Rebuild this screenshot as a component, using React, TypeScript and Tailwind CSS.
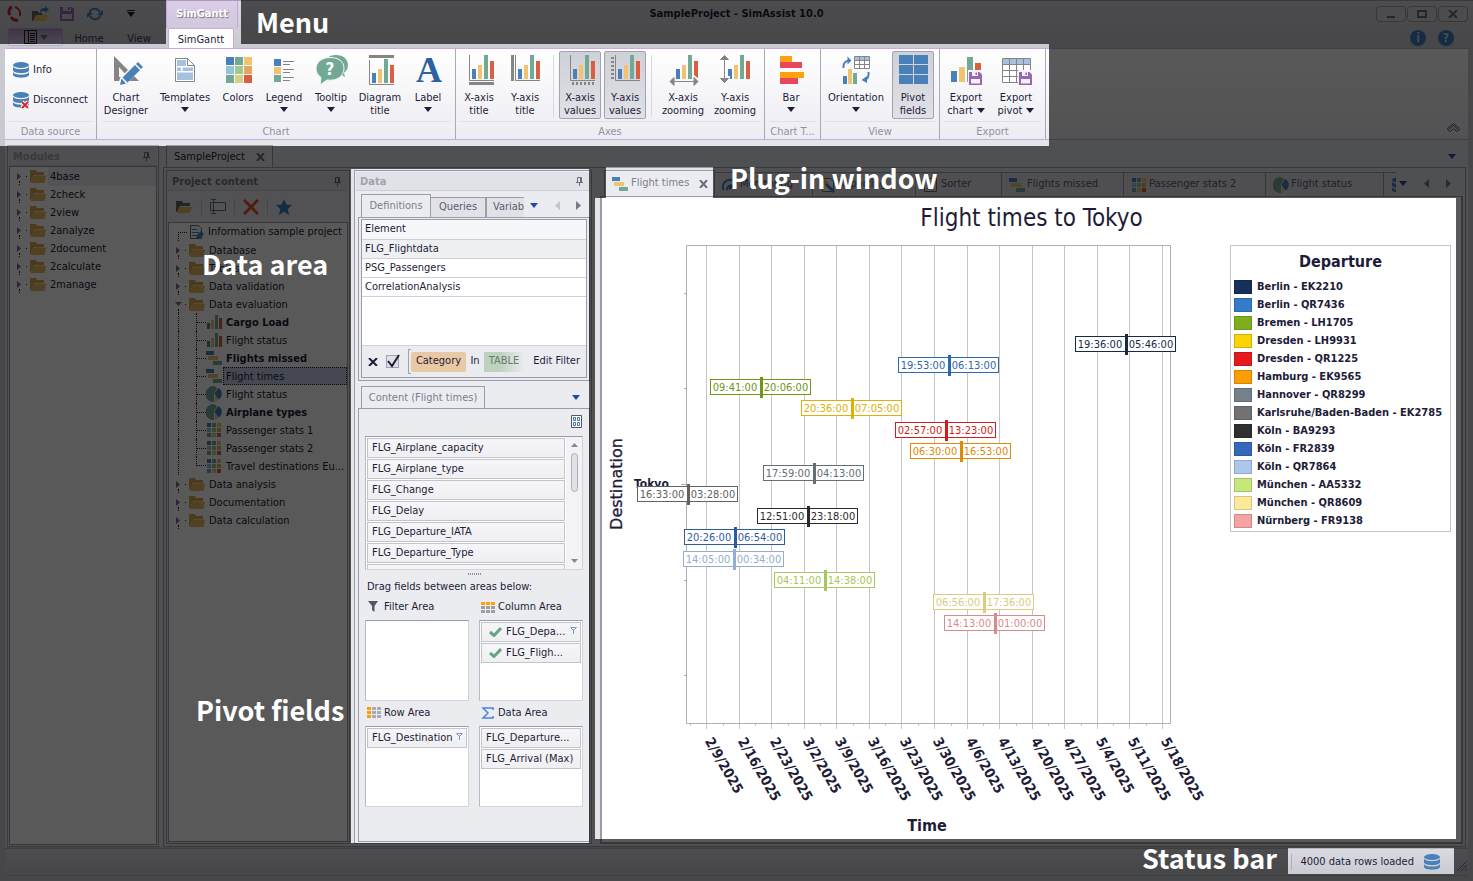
import React from 'react';

const BLUE = '#4a80b8';
const YELLOW = '#efc370';
const GREEN = '#72a995';
const RED = '#da5f40';
const GRAY = '#858585';

const FourBars: React.FC = () => (
  <>
    <rect x="9" y="15" width="4" height="10" fill={BLUE} />
    <rect x="15" y="11" width="4" height="14" fill={YELLOW} />
    <rect x="21" y="1" width="4" height="24" fill={GREEN} />
    <rect x="27" y="7" width="4" height="18" fill={RED} />
  </>
);

const Axis: React.FC = () => <path d="M6.5 1v25.5H31" fill="none" stroke={GRAY} />;

const Floppy: React.FC = () => (
  <>
    <path d="M18 16h14v15H18z" fill="#f6f6fa" />
    <path d="M19 18h10.500l2.500 2.500V31H19z" fill="#9468b0" />
    <path d="M22 18h6v4h-6zM21 25h9v4.500h-9z" fill="#f4f0f8" />
    <path d="M25.500 18.500h1.500v2.500h-1.500z" fill="#9468b0" />
  </>
);

const icons = {
  designer: (
    <>
      <path d="M4 2v25h25zM9 13l9 10H9z" fill={GRAY} fillRule="evenodd" />
      <path d="M8 32l2-8L27 7l6 6-17 17z" fill="#f8f8fb" />
      <path d="M10 31l1.500-6.500 4.500 5zM12.500 23.500L25 11l5 5-12.500 12.500zM26 10l2-2 5 5-2 2z" fill={BLUE} />
    </>
  ),
  templates: (
    <>
      <path d="M6.500 4.500h12l7 7v16h-19z" fill="#fff" stroke={GRAY} />
      <path d="M18.500 4.500v7h7" fill="none" stroke={GRAY} />
      <path d="M8 6h9v6H8zM8 13.500h4V17H8zM13.500 13.500H24V17H13.500zM8 18.500h16V26H8z" fill="#a6c0de" />
    </>
  ),
  colors: (
    <>
      <path d="M4 3h8v8H4z" fill={BLUE} />
      <path d="M13 3h8v8h-8z" fill={GREEN} />
      <path d="M22 3h8v8h-8z" fill={YELLOW} />
      <path d="M4 12h8v8H4z" fill="#93c5d8" />
      <path d="M13 12h8v8h-8z" fill="#9ccb8c" />
      <path d="M22 12h8v8h-8z" fill="#e5a75e" />
      <path d="M4 21h8v8H4z" fill={GREEN} />
      <path d="M13 21h8v8h-8z" fill="#d8cf86" />
      <path d="M22 21h8v8h-8z" fill={RED} />
    </>
  ),
  legend: (
    <>
      <path d="M6 5h7v7H6z" fill={BLUE} />
      <path d="M6 13h7v7H6z" fill={YELLOW} />
      <path d="M6 21h7v7H6z" fill={GREEN} />
      <path d="M15 7.500h11M15 10.500h7M15 15.500h11M15 18.500h7M15 23.500h11M15 26.500h7" stroke={GRAY} />
    </>
  ),
  tooltip: (
    <>
      <path d="M10 7c2-4 6-6 11-6 7 0 12 4 12 10 0 4-2 6-4 8l1 4-5-3z" fill={GREEN} />
      <path d="M15 3.500C7 3.500 1 8 1 14.500c0 4 2 7 5 9L5 31l7-5c10 1.500 17-4 17-11.500S23 3.500 15 3.500z" fill={GREEN} stroke="#f8f8fb" />
      <text x="15" y="21" textAnchor="middle" fontSize="17" fontWeight="bold" fill="#fff">?</text>
    </>
  ),
  diagramTitle: (
    <>
      <path d="M5 1h25v3H5z" fill={GRAY} />
      <path d="M5.500 6v24.500H30" fill="none" stroke={GRAY} />
      <path d="M8 19h4v10H8z" fill={BLUE} />
      <path d="M14 15h4v14h-4z" fill={YELLOW} />
      <path d="M20 5h4v24h-4z" fill={GREEN} />
      <path d="M26 11h4v18h-4z" fill={RED} />
    </>
  ),
  label: (
    <text x="17" y="28" textAnchor="middle" fontFamily="Liberation Serif, serif" fontSize="36" fontWeight="bold" fill="#2a62a4">A</text>
  ),
  xTitle: (
    <>
      <Axis />
      <FourBars />
      <path d="M6 28h25v3H6z" fill={GRAY} />
    </>
  ),
  yTitle: (
    <>
      <Axis />
      <FourBars />
      <path d="M2 1h3v26H2z" fill={GRAY} />
    </>
  ),
  xValues: (
    <>
      <Axis />
      <FourBars />
      <path d="M8 29.500h23" stroke={GRAY} strokeWidth="3" strokeDasharray="2 2" />
    </>
  ),
  yValues: (
    <>
      <Axis />
      <FourBars />
      <path d="M3.500 3v23" stroke={GRAY} strokeWidth="3" strokeDasharray="2 2" />
    </>
  ),
  xZoom: (
    <>
      <FourBars />
      <path d="M26 25l1-4 5 4z" fill="#f6f6fa" />
      <path d="M5 27.500h24M3 27.500l4-4v8zM31 27.500l-4-4v8z" stroke={GRAY} fill={GRAY} />
    </>
  ),
  yZoom: (
    <>
      <FourBars />
      <path d="M5 22h6v4H5z" fill="#f6f6fa" />
      <path d="M5.500 4v20M5.500 1.500l-4 4h8zM5.500 28.500l-4-4h8z" stroke={GRAY} fill={GRAY} />
    </>
  ),
  bar: (
    <>
      <path d="M5 2h12v6H5zM5 18h24v6H5z" fill="#ffa10f" />
      <path d="M5 8h22v6H5zM5 24h18v6H5z" fill="#e9455b" />
    </>
  ),
  orientation: (
    <>
      <path d="M14.500 2.500h15v12h-15z" fill="#fff" stroke={GRAY} />
      <path d="M15 3h14v3H15z" fill="#a6c0de" />
      <path d="M14.500 6.500h15M14.500 10.500h15M19.500 3v12M24.500 3v12" stroke={GRAY} />
      <path d="M3 22h4v8H3z" fill={BLUE} />
      <path d="M8 15h4v15H8z" fill={YELLOW} />
      <path d="M13 19h4v11h-4z" fill={GREEN} />
      <path d="M3.500 14C3 10 5 7 9 6.500M28.500 18c.5 4-1 7-4 8" fill="none" stroke={BLUE} strokeWidth="2" />
      <path d="M7.500 2.500l4 4-4 4zM27 22v7l-5.500-3z" fill={BLUE} />
    </>
  ),
  pivotFields: (
    <path
      d="M2 1h14v9H2zM17 1h14v9H17zM2 11h14v9H2zM17 11h14v9H17zM2 21h14v9H2zM17 21h14v9H17z"
      fill={BLUE}
    />
  ),
  exportChart: (
    <>
      <path d="M1 17h6v11H1z" fill={BLUE} />
      <path d="M9 13h6v15H9z" fill={YELLOW} />
      <path d="M17 3h6v25h-6z" fill={GREEN} />
      <path d="M25 9h6v10h-6z" fill={RED} />
      <Floppy />
    </>
  ),
  exportPivot: (
    <>
      <path d="M2.500 4.500h28v24h-28z" fill="#fff" stroke={GRAY} />
      <path d="M3 5h27v5H3z" fill="#a6c0de" />
      <path d="M2.500 10.500h28M2.500 16.500h28M2.500 22.500h28M9.500 5v24M16.500 5v24M23.500 5v24" stroke={GRAY} />
      <Floppy />
    </>
  ),
};

type IconName = keyof typeof icons;

const Caret: React.FC<{ className?: string }> = ({ className = 'fill-[#1e1c38]' }) => (
  <svg width="8" height="5" viewBox="0 0 8 5" className={className}>
    <path d="M0 0h8L4 5z" />
  </svg>
);

const Triangle: React.FC<{ dir: 'left' | 'right'; className: string }> = ({ dir, className }) => (
  <svg width="5" height="9" viewBox="0 0 5 9" className={className}>
    <path d={dir === 'left' ? 'M5 0v9L0 4.500z' : 'M0 0v9l5-4.500z'} />
  </svg>
);

const Database: React.FC<{ broken?: boolean }> = ({ broken }) => (
  <svg width="16" height="18" viewBox="0 0 16 18">
    <g fill={BLUE}>
      <ellipse cx="8" cy="4" rx="8" ry="3" />
      <path d="M0 5.500c1 3.500 15 3.500 16 0v4c-1 3.500-15 3.500-16 0zM0 11c1 3.500 15 3.500 16 0v3c-1 3.500-15 3.500-16 0z" />
    </g>
    {broken && <path d="M9 11l6 6m0-6l-6 6" stroke="#fff" strokeWidth="4" />}
    {broken && <path d="M9 11l6 6m0-6l-6 6" stroke="#d8262c" strokeWidth="2" />}
  </svg>
);

const Pin: React.FC = () => (
  <svg width="8" height="9" viewBox="0 0 8 9" fill="none" stroke="#6c6c7e">
    <path d="M1.500 5V.5h4V5M0 5.500h7M3.500 6v3" />
    <path d="M5 1v4" strokeWidth="2" />
  </svg>
);

const Close: React.FC = () => (
  <svg width="9" height="8" viewBox="0 0 9 8" stroke="#6c6c7e" strokeWidth="2">
    <path d="M1 0l7 8M8 0L1 8" />
  </svg>
);

const smallIcons = {
  folder: (
    <>
      <path d="M0 2h6l1 2h7v3H4L1 14H0z" fill="#dba84c" />
      <path d="M3.500 7.500H16L14.500 15H1z" fill="#e8b75e" />
    </>
  ),
  doc: (
    <>
      <path d="M1.500 1.500h8l3 3v10h-11z" fill="#fff" stroke="#6c6c6c" />
      <path d="M3 5.500h5M3 8.500h7M3 11.500h5" stroke={BLUE} />
      <path d="M7 15l1-4 4-4 3 3-4 4z" fill={BLUE} />
    </>
  ),
  bars: (
    <>
      <path d="M1 9h3v6H1z" fill={BLUE} />
      <path d="M5 6h3v9H5z" fill={YELLOW} />
      <path d="M9 1h3v14H9z" fill={GREEN} />
      <path d="M13 4h3v11h-3z" fill={RED} />
    </>
  ),
  gantt: (
    <>
      <path d="M0 1h8v4H0z" fill={BLUE} />
      <path d="M2 6h10v4H2z" fill={YELLOW} />
      <path d="M7 11h9v4H7z" fill={GREEN} />
    </>
  ),
  pie: (
    <>
      <path d="M7 0a8 8 0 1 0 1 16V8L11 2A8 8 0 0 0 7 0z" fill={GREEN} />
      <path d="M12 2l-3.500 6 4 5.500C17 11 17 4 12 2z" fill={BLUE} />
      <path d="M9 9l3 5-3 2z" fill={YELLOW} />
    </>
  ),
  grid: (
    <>
      <path d="M1 1h4v4H1z" fill={BLUE} />
      <path d="M6 1h4v4H6zM1 11h4v4H1z" fill={GREEN} />
      <path d="M11 1h4v4h-4z" fill={YELLOW} />
      <path d="M1 6h4v4H1z" fill="#93c5d8" />
      <path d="M6 6h4v4H6z" fill="#9ccb8c" />
      <path d="M11 6h4v4h-4z" fill="#e5a75e" />
      <path d="M6 11h4v4H6z" fill="#d8cf86" />
      <path d="M11 11h4v4h-4z" fill={RED} />
    </>
  ),
  gauge: (
    <>
      <path d="M1.500 13a7 7 0 0 1 13-6M5 13a4 4 0 0 1 6-4" fill="none" stroke={BLUE} strokeWidth="2" />
      <path d="M7 12l5-4" stroke="#555" strokeWidth="2" />
    </>
  ),
  report: (
    <>
      <path d="M2.500 1.500h8l3 3v10h-11z" fill="#fff" stroke="#6c6c6c" />
      <path d="M2 4l3-2 3 3-3 3z" fill={YELLOW} />
      <path d="M6 7l8 8" stroke={BLUE} strokeWidth="3" />
    </>
  ),
  sorter: <path d="M1.500 1.500h12v13h-12zM4 5.500h2M8 5.500h3M4 8.500h2M8 8.500h3M4 11.500h2M8 11.500h3" fill="none" stroke="#6c6c6c" />,
};

type SmallIconName = keyof typeof smallIcons;

const SmallIcon: React.FC<{ name: SmallIconName }> = ({ name }) => (
  <svg width="16" height="16" viewBox="0 0 16 16" className="flex-shrink-0">
    {smallIcons[name]}
  </svg>
);

const RibbonButton: React.FC<{
  icon: IconName;
  lines: string[];
  width: string;
  caret?: boolean;
  pressed?: boolean;
}> = ({ icon, lines, width, caret, pressed }) => (
  <button
    className={`flex h-[68px] flex-col items-center rounded-xs border pt-0.5 leading-[13px] ${width} ${
      pressed ? 'border-[#a2a3b2] bg-linear-to-b from-[#cfd1d8] to-[#e0e1e6]' : 'border-transparent'
    }`}
  >
    <svg width="34" height="34" viewBox="-1 0 34 34" className="flex-shrink-0 overflow-visible">
      {icons[icon]}
    </svg>
    <span className="mt-[3px] whitespace-nowrap">{lines[0]}</span>
    {lines[1] ? (
      <span className="flex items-center gap-1 whitespace-nowrap">
        {lines[1]}
        {caret && <Caret />}
      </span>
    ) : (
      caret && (
        <span className="mt-[3px]">
          <Caret />
        </span>
      )
    )}
  </button>
);

const RibbonGroup: React.FC<{ title: string; width: string; children: React.ReactNode }> = ({ title, width, children }) => (
  <section className={`flex flex-shrink-0 flex-col border-r border-[#a9aab8] pt-0.5 ${width}`}>
    <div className="flex h-[70px]">{children}</div>
    <h2 className="mx-1 whitespace-nowrap border-t border-[#e0e0e6] pt-[3px] text-center leading-[14px] text-[#92929f]">{title}</h2>
  </section>
);

const Divider: React.FC = () => <div className="mx-[5px] my-1 w-px bg-[#d9d9e0]" />;

const WindowButton: React.FC<{ label: string; children: React.ReactNode }> = ({ label, children }) => (
  <button aria-label={label} className="flex h-4 w-[30px] items-center justify-center rounded-sm border border-[#9c9ca8] bg-[#d8d9df]">
    <svg width="10" height="8" viewBox="0 0 10 8" fill="none" stroke="#6c6c78" strokeWidth="2">
      {children}
    </svg>
  </button>
);

const TitleBar: React.FC = () => (
  <div className="grid h-7 grid-cols-[1fr_auto_1fr] border-t border-[#a4a4ae]">
    <div className="flex">
      <div className="flex w-[166px] items-center pl-[7px] pb-[2px]">
        <svg width="15" height="17" viewBox="0 0 15 17" fill="none" stroke="#d0202c" strokeWidth="3">
          <path d="M3 10C1 7 2 3 5 2" />
          <path d="M8 2c4 1 6 5 5 9" strokeWidth="2" />
          <path d="M4 12c2 3 4 4 7 3" />
        </svg>
        <svg width="17" height="16" viewBox="0 0 17 16" className="ml-2.5">
          <path d="M0 5h6l1 2h3v3H4l-3 5H0z" fill="#626262" />
          <path d="M4 9h12l-2 6H1z" fill="#e8b75e" />
          <path d="M8 7c0-4 2-5 5-5V0l4 3.500L13 7V5c-2 0-3 0-5 2z" fill={BLUE} />
        </svg>
        <svg width="14" height="14" viewBox="0 0 14 14" className="ml-[11px]">
          <path d="M0 0h12l2 2v12H0z" fill="#9468b0" />
          <path d="M3 0h8v4H3zM2 7h10v5H2z" fill="#d4d4da" />
          <path d="M8 0h2v3H8z" fill="#9468b0" />
        </svg>
        <svg width="16" height="14" viewBox="0 0 16 14" className="ml-[13px]" fill="none" stroke={BLUE} strokeWidth="2">
          <path d="M2.500 6C4 1 10 0 13 5M13.500 8C12 13 6 14 3 9" />
          <path d="M16 3v5h-6zM0 11V6h6z" fill={BLUE} stroke="none" />
        </svg>
        <span className="ml-6 flex flex-col items-center gap-px">
          <span className="h-px w-2 bg-[#1e1c38]" />
          <Caret />
        </span>
      </div>
      <div className="w-[72px] border-x border-[#c7a3e0] bg-linear-to-b from-[#dccbe8] to-[#cfcadb] pt-1 text-center font-bold leading-[18px] text-white [text-shadow:1px_1px_1px_#77748a]">
        SimGantt
      </div>
    </div>
    <h1 className="pt-1 font-bold leading-[18px]">SampleProject - SimAssist 10.0</h1>
    <div className="flex justify-end gap-px pt-[5px] pr-[5px]">
      <WindowButton label="Minimize">
        <path d="M1 7h8" />
      </WindowButton>
      <WindowButton label="Maximize">
        <path d="M1 1h8v6H1z" />
      </WindowButton>
      <WindowButton label="Close">
        <path d="M1 0l8 8M9 0L1 8" />
      </WindowButton>
    </div>
  </div>
);

const RibbonTabs: React.FC = () => (
  <nav className="flex h-5 items-start">
    <button aria-label="Application menu" className="ml-2 flex h-[18px] w-[55px] items-center justify-center gap-0.5 rounded-xs border border-[#b3b3c0] bg-linear-to-b from-[#b394cb] to-[#dccfe8]">
      <svg width="14" height="14" viewBox="0 0 14 14" fill="none" stroke="#222">
        <path d="M.5.500h12v13H.5zM4.500.500v13M6 3.500h5M6 5.500h5M6 7.500h5M6 9.500h5M6 11.500h5" />
      </svg>
      <Caret className="fill-[#6c6c7e]" />
    </button>
    <a href="#" className="w-[52px] pt-0.5 text-center leading-[18px] text-[#3a3a50]">Home</a>
    <a href="#" className="w-[48px] pt-0.5 text-center leading-[18px] text-[#3a3a50]">View</a>
    <a href="#" className="ml-[5px] h-[21px] w-[66px] rounded-t-xs border border-b-0 border-[#c9a8e3] bg-white pt-0.5 text-center leading-[18px]">
      SimGantt
    </a>
    <div className="ml-auto flex gap-3 pr-[19px] pt-0.5">
      {['i', '?'].map((sign) => (
        <button key={sign} className="size-4 rounded-full bg-[#3c7fc4] text-xs font-bold leading-4 text-[#d4d4da]">
          {sign}
        </button>
      ))}
    </div>
  </nav>
);

const Ribbon: React.FC = () => (
  <div className="mx-[5px] flex h-[92px] border-y border-[#c9a8e3] bg-linear-to-b from-white to-[#ececf2]">
    <RibbonGroup title="Data source" width="w-[92px]">
      <div className="flex flex-col pl-2 pt-1">
        <button className="flex h-[30px] items-center gap-1">
          <Database /> Info
        </button>
        <button className="flex h-[30px] items-center gap-1">
          <Database broken /> Disconnect
        </button>
      </div>
    </RibbonGroup>
    <RibbonGroup title="Chart" width="w-[359px]">
      <RibbonButton icon="designer" lines={['Chart', 'Designer']} width="w-14 ml-px" />
      <RibbonButton icon="templates" lines={['Templates']} width="w-[62px]" caret />
      <RibbonButton icon="colors" lines={['Colors']} width="w-11" />
      <RibbonButton icon="legend" lines={['Legend']} width="w-12" caret />
      <RibbonButton icon="tooltip" lines={['Tooltip']} width="w-[46px]" caret />
      <RibbonButton icon="diagramTitle" lines={['Diagram', 'title']} width="w-[52px]" />
      <RibbonButton icon="label" lines={['Label']} width="w-11" caret />
    </RibbonGroup>
    <RibbonGroup title="Axes" width="w-[309px]">
      <RibbonButton icon="xTitle" lines={['X-axis', 'title']} width="w-[46px]" />
      <RibbonButton icon="yTitle" lines={['Y-axis', 'title']} width="w-[46px]" />
      <Divider />
      <div className="flex gap-[3px]">
        <RibbonButton icon="xValues" lines={['X-axis', 'values']} width="w-[42px]" pressed />
        <RibbonButton icon="yValues" lines={['Y-axis', 'values']} width="w-[42px]" pressed />
      </div>
      <Divider />
      <RibbonButton icon="xZoom" lines={['X-axis', 'zooming']} width="w-[52px]" />
      <RibbonButton icon="yZoom" lines={['Y-axis', 'zooming']} width="w-[52px]" />
    </RibbonGroup>
    <RibbonGroup title="Chart T..." width="w-14">
      <RibbonButton icon="bar" lines={['Bar']} width="w-[52px]" caret />
    </RibbonGroup>
    <RibbonGroup title="View" width="w-[119px]">
      <RibbonButton icon="orientation" lines={['Orientation']} width="w-[70px]" caret />
      <RibbonButton icon="pivotFields" lines={['Pivot', 'fields']} width="w-[42px] ml-px" pressed />
    </RibbonGroup>
    <RibbonGroup title="Export" width="w-[106px]">
      <RibbonButton icon="exportChart" lines={['Export', 'chart']} width="w-[50px] ml-px" caret />
      <RibbonButton icon="exportPivot" lines={['Export', 'pivot']} width="w-[50px]" caret />
    </RibbonGroup>
    <button aria-label="Collapse ribbon" className="mb-1.5 ml-auto mr-2 self-end">
      <svg width="13" height="10" viewBox="0 0 13 10" fill="none" stroke="#5c5c68">
        <path d="M.5 5.500l6-5 6 5-1 2-2 1-3-3-3 3-2-1z" />
        <path d="M2 6.500l4.500-4 4.500 4" />
      </svg>
    </button>
  </div>
);

const PanelHeader: React.FC<{ title: string; muted?: boolean }> = ({ title, muted }) => (
  <div className="flex h-[19px] items-center justify-between border-b border-[#cdced6] bg-[#e1e2e7] pl-1 pr-1.5 pt-px">
    <h2 className={`font-bold leading-4 ${muted ? 'text-[#a2a2b0]' : 'text-[#74748a]'}`}>{title}</h2>
    <button aria-label={`Pin ${title}`}>
      <Pin />
    </button>
  </div>
);

const TreeToggle: React.FC<{ open?: boolean }> = ({ open }) => (
  <span className="flex h-full w-2 flex-shrink-0 flex-col items-center justify-between">
    <span className="h-1" />
    {open ? (
      <svg width="7" height="4" viewBox="0 0 7 4" fill="#74748a">
        <path d="M0 0h7L3.500 4z" />
      </svg>
    ) : (
      <svg width="4" height="7" viewBox="0 0 4 7" fill="#74748a">
        <path d="M0 0v7l4-3.500z" />
      </svg>
    )}
    <span className="h-1 border-l border-dotted border-[#222]" />
  </span>
);

const FolderRow: React.FC<{ label: string; open?: boolean; active?: boolean }> = ({ label, open, active }) => (
  <li className="flex h-[18px] items-center pl-[5px]">
    <TreeToggle open={open} />
    <span className="mx-[3px] w-px border-t border-dotted border-[#222]" />
    <SmallIcon name="folder" />
    <span className={`ml-0.5 flex-1 pl-0.5 pt-px leading-[18px] ${active ? 'bg-[#ecedf1]' : ''}`}>{label}</span>
  </li>
);

const modules = ['4base', '2check', '2view', '2analyze', '2document', '2calculate', '2manage'];

const ModulesPanel: React.FC = () => (
  <aside className="flex w-[152px] flex-shrink-0 flex-col border border-[#a4a4b2] bg-[#ebecf0] p-px">
    <PanelHeader title="Modules" muted />
    <ul className="flex-1 border border-[#9c9baa] bg-white">
      {modules.map((name, i) => (
        <FolderRow key={name} label={name} active={i === 0} />
      ))}
    </ul>
  </aside>
);

const evaluations: { icon: SmallIconName; label: string; bold?: boolean; selected?: boolean }[] = [
  { icon: 'bars', label: 'Cargo Load', bold: true },
  { icon: 'bars', label: 'Flight status' },
  { icon: 'gantt', label: 'Flights missed', bold: true },
  { icon: 'gantt', label: 'Flight times', selected: true },
  { icon: 'pie', label: 'Flight status' },
  { icon: 'pie', label: 'Airplane types', bold: true },
  { icon: 'grid', label: 'Passenger stats 1' },
  { icon: 'grid', label: 'Passenger stats 2' },
  { icon: 'grid', label: 'Travel destinations Eu...' },
];

const ProjectPanel: React.FC = () => (
  <aside className="flex w-[184px] flex-shrink-0 flex-col border border-[#9c9baa] bg-[#ebecf0] p-px">
    <PanelHeader title="Project content" />
    <div className="flex h-[31px] items-center pl-2">
      <button aria-label="Open">
        <svg width="17" height="14" viewBox="0 0 17 14">
          <path d="M0 1h6l1 2h7v3H4l-3 6H0z" fill="#666" />
          <path d="M4 7h13l-4 6H1z" fill="#e8b75e" />
        </svg>
      </button>
      <span className="mx-2 h-4 w-px bg-[#c6c6d0]" />
      <button aria-label="Rename">
        <svg width="16" height="15" viewBox="0 0 16 15" fill="none" stroke="#6c6c7e">
          <path d="M.5 3.500h15v8H.5z" />
          <path d="M1 .500h5M3.500 1v13M1 14.500h5" stroke="#3c7fc4" />
        </svg>
      </button>
      <span className="mx-2 h-4 w-px bg-[#c6c6d0]" />
      <button aria-label="Delete">
        <svg width="16" height="16" viewBox="0 0 16 16" stroke="#e2502c" strokeWidth="3">
          <path d="M1 1l14 14M15 1L1 15" />
        </svg>
      </button>
      <span className="mx-2 h-4 w-px bg-[#c6c6d0]" />
      <button aria-label="Favorite">
        <svg width="16" height="16" viewBox="0 0 16 16" fill="#3c7fc4">
          <path d="M8 0l2.400 5.400 5.600.6-4.200 3.900L13 16l-5-3.200L3 16l1.200-6.100L0 6l5.600-.6z" />
        </svg>
      </button>
    </div>
    <ul className="flex-1 border border-[#9c9baa] bg-white">
      <li className="flex h-[18px] items-center pl-[9px]">
        <span className="h-[9px] w-[9px] self-end border-l border-t border-dotted border-[#222]" />
        <span className="ml-0.5 mr-[3px] flex">
          <SmallIcon name="doc" />
        </span>
        <span className="whitespace-nowrap">Information sample project</span>
      </li>
      <FolderRow label="Database" />
      <FolderRow label="Tables" />
      <FolderRow label="Data validation" />
      <FolderRow label="Data evaluation" open />
      {evaluations.map(({ icon, label, bold, selected }, i) => (
        <li key={i} className="flex h-[18px] items-center pl-[9px]">
          <span className="h-full w-[18px] flex-shrink-0 border-l border-dotted border-[#222]" />
          <span
            className={`flex w-2.5 flex-shrink-0 border-l border-dotted border-[#222] ${
              i === evaluations.length - 1 ? 'h-[9px] items-end self-start' : 'h-full items-center'
            }`}
          >
            <span className="w-full border-t border-dotted border-[#222]" />
          </span>
          <SmallIcon name={icon} />
          <span
            className={`ml-px h-full flex-1 whitespace-nowrap border border-dotted pl-0.5 leading-[17px] ${bold ? 'font-bold' : ''} ${
              selected ? 'border-[#222] bg-[#c5cee4]' : 'border-transparent'
            }`}
          >
            {label}
          </span>
        </li>
      ))}
      <FolderRow label="Data analysis" />
      <FolderRow label="Documentation" />
      <FolderRow label="Data calculation" />
    </ul>
  </aside>
);

const Field: React.FC<{ name: string; check?: boolean; filter?: boolean }> = ({ name, check, filter }) => (
  <li className="flex h-5 flex-shrink-0 items-center border border-[#c2c3cd] bg-linear-to-b from-[#f6f6f8] to-[#efeff2] pl-1">
    {check && (
      <svg width="13" height="10" viewBox="0 0 13 10" className="ml-[3px] mr-1" fill="none" stroke="#68a388" strokeWidth="3">
        <path d="M1 5l4 3.500L12 1" />
      </svg>
    )}
    <span className="whitespace-nowrap">{name}</span>
    {filter && (
      <svg width="7" height="8" viewBox="0 0 7 8" className="ml-auto mr-[3px] mb-1" fill="none" stroke="#8796cf">
        <path d="M.5 1.500h6L4 4H3zM3.500 4v4" />
      </svg>
    )}
  </li>
);

const AreaBox: React.FC<{ title: string; icon: React.ReactNode; children?: React.ReactNode }> = ({ title, icon, children }) => (
  <section>
    <h3 className="flex h-[25px] items-center gap-0.5 pl-0.5">
      <svg width="15" height="13" viewBox="0 0 15 13">
        {icon}
      </svg>
      {title}
    </h3>
    <ul className="flex h-[81px] flex-col gap-px border border-[#d3d4db] border-t-[#9c9baa] border-l-[#b8b9c5] bg-white p-px">{children}</ul>
  </section>
);

const availableFields = [
  'FLG_Airplane_capacity',
  'FLG_Airplane_type',
  'FLG_Change',
  'FLG_Delay',
  'FLG_Departure_IATA',
  'FLG_Departure_Type',
  'FLG_Destination_IATA',
];

const DataPanel: React.FC = () => (
  <aside className="flex w-[238px] flex-shrink-0 flex-col border border-[#9c9baa] bg-[#ebecf0] p-px">
    <PanelHeader title="Data" muted />
    <div className="flex items-end px-[5px] pt-[3px]">
      <button className="-mb-px h-6 w-[70px] border border-b-0 border-[#9c9baa] bg-[#ebecf0] text-[#7d7d8e]">Definitions</button>
      <button className="h-5 w-[55px] border border-b-0 border-l-0 border-[#9c9baa] bg-[#e1e2e7] text-[#5c5c70]">Queries</button>
      <button className="h-5 w-[38px] overflow-hidden whitespace-nowrap border border-b-0 border-r-0 border-[#9c9baa] bg-[#e1e2e7] pl-1.5 text-left text-[#5c5c70]">
        Variables
      </button>
      <div className="flex flex-1 items-center justify-between self-center pl-1.5 pr-1">
        <Caret className="fill-[#2346ad]" />
        <Triangle dir="left" className="fill-[#c3c3cc]" />
        <Triangle dir="right" className="fill-[#78788a]" />
      </div>
    </div>
    <div className="ml-0.5 border border-[#9c9baa] p-0.5 pt-px">
      <div className="border border-[#9c9baa] bg-white">
        <div className="h-[125px]">
          <table className="w-full border-collapse text-left leading-[18px]">
            <thead>
              <tr className="border-b border-[#cfd0d8] bg-[#f6f7f9]">
                <th className="pb-px pl-[3px] font-normal">Element</th>
              </tr>
            </thead>
            <tbody>
              {['FLG_Flightdata', 'PSG_Passengers', 'CorrelationAnalysis'].map((name, i) => (
                <tr key={name} className={`border-b border-[#cfd0d8] ${i === 0 ? 'bg-[#eff0f2]' : ''}`}>
                  <td className="pl-[3px]">{name}</td>
                </tr>
              ))}
            </tbody>
          </table>
        </div>
        <div className="flex h-8 items-center border-t border-[#cfd0d8] bg-[#ebecf0] pl-1.5">
          <button aria-label="Clear filter">
            <svg width="10" height="8" viewBox="0 0 10 8" stroke="#1e1c38" strokeWidth="2">
              <path d="M1 0l8 8M9 0L1 8" />
            </svg>
          </button>
          <label className="relative ml-2 flex">
            <input type="checkbox" defaultChecked aria-label="Filter active" className="size-[13px] appearance-none border border-[#a2a3b2] bg-[#dfe0e5]" />
            <svg width="14" height="14" viewBox="0 0 14 14" className="pointer-events-none absolute -top-px left-0" fill="none" stroke="#1e1c38" strokeWidth="2">
              <path d="M2 7l4 5 7-11" />
            </svg>
          </label>
          <span className="ml-[9px] h-[25px] w-[3px] border border-r-0 border-[#a2a3b2]" />
          <button className="h-5 w-[55px] rounded-xs bg-[#e9c9a5]">Category</button>
          <span className="w-[18px] text-center">In</span>
          <button className="h-5 w-10 bg-linear-to-r from-[#bdd3bd] from-40% to-[#ebecf0] text-[#6c7a70]">TABLE</button>
          <button className="ml-auto mr-1.5 whitespace-nowrap">Edit Filter</button>
        </div>
      </div>
    </div>
    <div className="flex items-end justify-between pl-[5px] pr-2.5 pt-[5px]">
      <button className="-mb-px h-[23px] w-[124px] border border-b-0 border-[#9c9baa] bg-[#ebecf0] text-[#7d7d8e]">Content (Flight times)</button>
      <span className="self-center">
        <Caret className="fill-[#2346ad]" />
      </span>
    </div>
    <div className="ml-0.5 flex flex-1 flex-col border border-[#9c9baa] px-1.5 pt-1.5">
      <button aria-label="Field layout" className="mr-px self-end">
        <svg width="11" height="13" viewBox="0 0 11 13" fill="none">
          <path d="M.5.500h10v12H.5z" stroke="#555568" fill="#fff" />
          <path d="M2.500 2.500h2v3h-2zM6.500 2.500h2v3h-2zM2.500 7.500h2v3h-2zM6.500 7.500h2v3h-2z" stroke="#3f74cc" />
        </svg>
      </button>
      <div className="mt-2 flex h-[134px] border border-[#d3d4db] border-t-[#9c9baa] border-l-[#b8b9c5] bg-white">
        <ul className="flex flex-1 flex-col gap-px overflow-hidden p-px">
          {availableFields.map((name) => (
            <Field key={name} name={name} />
          ))}
        </ul>
        <div className="flex w-4 flex-col items-center justify-between bg-[#f3f3f6] py-1.5">
          <div className="flex flex-col items-center gap-1.5">
            <svg width="7" height="4" viewBox="0 0 7 4" fill="#85859a">
              <path d="M0 4h7L3.500 0z" />
            </svg>
            <div className="h-[39px] w-[7px] rounded-full border border-[#b0b0bc] bg-[#e0e0e6]" />
          </div>
          <svg width="7" height="4" viewBox="0 0 7 4" fill="#85859a">
            <path d="M0 0h7L3.500 4z" />
          </svg>
        </div>
      </div>
      <svg width="13" height="2" viewBox="0 0 13 2" className="mx-auto mt-[3px]">
        <path d="M0 1h13" stroke="#8f8fa0" strokeWidth="2" strokeDasharray="1 1" />
      </svg>
      <p className="mt-1 pl-0.5 leading-4">Drag fields between areas below:</p>
      <div className="grid grid-cols-2 gap-x-2.5">
        <AreaBox title="Filter Area" icon={<path d="M1 0h10L7.500 5v6L5 9V5z" fill="#555568" />}></AreaBox>
        <AreaBox
          title="Column Area"
          icon={
            <>
              <path d="M0 1h4v3H0zM5 1h4v3H5zM10 1h4v3h-4z" fill="#ff9d0a" />
              <path d="M0 5h4v3H0zM5 5h4v3H5zM10 5h4v3h-4zM0 9h4v3H0zM5 9h4v3H5zM10 9h4v3h-4z" fill="#9e9ea8" />
            </>
          }
        >
          <Field name="FLG_Depa..." check filter />
          <Field name="FLG_Fligh..." check />
        </AreaBox>
        <AreaBox
          title="Row Area"
          icon={
            <>
              <path d="M0 0h4v3H0zM0 4h4v3H0zM0 8h4v3H0z" fill="#ff9d0a" />
              <path d="M5 0h4v3H5zM10 0h4v3h-4zM5 4h4v3H5zM10 4h4v3h-4zM5 8h4v3H5zM10 8h4v3h-4z" fill="#aaaab2" />
            </>
          }
        >
          <Field name="FLG_Destination" filter />
        </AreaBox>
        <AreaBox title="Data Area" icon={<path d="M12 3V1H2l5 5-5 5h10V9" fill="none" stroke="#4f83d8" strokeWidth="1.500" />}>
          <Field name="FLG_Departure..." />
          <Field name="FLG_Arrival (Max)" />
        </AreaBox>
      </div>
    </div>
  </aside>
);

const ticks = [
  '2/9/2025', '2/16/2025', '2/23/2025', '3/2/2025', '3/9/2025', '3/16/2025', '3/23/2025', '3/30/2025',
  '4/6/2025', '4/13/2025', '4/20/2025', '4/27/2025', '5/4/2025', '5/11/2025', '5/18/2025',
];

// x and y locate the marker inside the plot area
const flights = [
  { x: 439, y: 99, start: '19:36:00', end: '05:46:00', color: '#15294a' },
  { x: 262, y: 120, start: '19:53:00', end: '06:13:00', color: '#2b68ac' },
  { x: 74, y: 142, start: '09:41:00', end: '20:06:00', color: '#6f9618' },
  { x: 165, y: 163, start: '20:36:00', end: '07:05:00', color: '#dcb208' },
  { x: 259, y: 185, start: '02:57:00', end: '13:23:00', color: '#cf1c20' },
  { x: 274, y: 206, start: '06:30:00', end: '16:53:00', color: '#dc8a08' },
  { x: 127, y: 228, start: '17:59:00', end: '04:13:00', color: '#656d75' },
  { x: 1, y: 249, start: '16:33:00', end: '03:28:00', color: '#626262' },
  { x: 121, y: 271, start: '12:51:00', end: '23:18:00', color: '#2a2a2a' },
  { x: 48, y: 292, start: '20:26:00', end: '06:54:00', color: '#2d5ba3' },
  { x: 47, y: 314, start: '14:05:00', end: '00:34:00', color: '#93aed0' },
  { x: 138, y: 335, start: '04:11:00', end: '14:38:00', color: '#a8c65c' },
  { x: 297, y: 357, start: '06:56:00', end: '17:36:00', color: '#dccb80' },
  { x: 308, y: 378, start: '14:13:00', end: '01:00:00', color: '#d98b8b' },
];

const legend = [
  { label: 'Berlin - EK2210', color: '#16305a' },
  { label: 'Berlin - QR7436', color: '#347cca' },
  { label: 'Bremen - LH1705', color: '#7fae1c' },
  { label: 'Dresden - LH9931', color: '#fad206' },
  { label: 'Dresden - QR1225', color: '#e41a1c' },
  { label: 'Hamburg - EK9565', color: '#fb9d04' },
  { label: 'Hannover - QR8299', color: '#75808a' },
  { label: 'Karlsruhe/Baden-Baden - EK2785', color: '#727272' },
  { label: 'Köln - BA9293', color: '#2f2f2f' },
  { label: 'Köln - FR2839', color: '#3468b8' },
  { label: 'Köln - QR7864', color: '#abc8ec' },
  { label: 'München - AA5332', color: '#c6e878' },
  { label: 'München - QR8609', color: '#fde99a' },
  { label: 'Nürnberg - FR9138', color: '#f6a3a3' },
];

const GanttChart: React.FC = () => (
  <svg width="605" height="595" viewBox="-84 0 605 595" className="flex-shrink-0 overflow-visible" fontSize="11" fill="#1e1c38">
    {ticks.map((label, i) => {
      const x = Math.round(20 + i * 32.57) + 0.5;
      return (
        <g key={label}>
          <path d={`M${x} 0v484M${x - 16} 478v3`} stroke="#c6c6c6" />
          <text transform={`translate(${x - 2} 496) rotate(60)`} fontSize="14" fontWeight="bold">
            {label}
          </text>
        </g>
      );
    })}
    <path d="M.5.500h484v478H.5zM-2 48.500h2M-2 143.500h2M-5 239.500h5M-2 335.500h2M-2 430.500h2" fill="none" stroke="#b0b0b0" />
    <text x="-52" y="243" fontSize="12" fontWeight="bold">Tokyo</text>
    <text transform="translate(-64 239) rotate(-90)" textAnchor="middle" fontFamily="DejaVu Sans, sans-serif" fontSize="16" stroke="#1e1c38" strokeWidth="0.300">
      Destination
    </text>
    <text x="241" y="586" textAnchor="middle" fontSize="16" fontWeight="bold">Time</text>
    {flights.map(({ x, y, start, end, color }) => (
      <g key={start} fill={color}>
        <rect x={x - 49.500} y={y - 7.500} width="100" height="15" fill="#fff" stroke={color} />
        <rect x={x} y={y - 10} width="3" height="21" />
        <text x={x - 25} y={y + 4} textAnchor="middle">{start}</text>
        <text x={x + 26} y={y + 4} textAnchor="middle">{end}</text>
      </g>
    ))}
  </svg>
);

const windowTabs: { icon: SmallIconName; label: string; width: string }[] = [
  { icon: 'gauge', label: 'Monitoring', width: 'w-[98px]' },
  { icon: 'report', label: 'Reporting', width: 'w-[103px]' },
  { icon: 'sorter', label: 'Sorter', width: 'w-[86px]' },
  { icon: 'gantt', label: 'Flights missed', width: 'w-[122px]' },
  { icon: 'grid', label: 'Passenger stats 2', width: 'w-[142px]' },
  { icon: 'pie', label: 'Flight status', width: 'w-[118px]' },
];

const PluginWindow: React.FC = () => (
  <section className="ml-2 flex min-w-0 flex-1 flex-col">
    <div className="flex h-[26px] items-end pl-1">
      <button className="flex h-[26px] w-[111px] flex-shrink-0 items-center border border-b-0 border-[#9c9baa] bg-[#ebecf0] pl-[7px] text-[#7d7d8e]">
        <SmallIcon name="gantt" />
        <span className="ml-[3px] flex-1 whitespace-nowrap text-left">Flight times</span>
        <span className="mr-1.5">
          <Close />
        </span>
      </button>
      {windowTabs.map(({ icon, label, width }) => (
        <button
          key={label}
          className={`flex h-6 flex-shrink-0 items-center gap-0.5 border border-b-0 border-l-0 border-[#9c9baa] bg-[#e1e2e7] pl-[7px] text-[#5c5c70] ${width}`}
        >
          <SmallIcon name={icon} />
          <span className="whitespace-nowrap">{label}</span>
        </button>
      ))}
      <button aria-label="Database" className="flex h-6 w-3 items-center overflow-hidden border-t border-[#9c9baa] bg-[#e1e2e7] pl-2">
        <span className="flex-shrink-0">
          <Database />
        </span>
      </button>
      <div className="ml-auto flex items-center gap-[17px] self-center pr-3">
        <Caret className="fill-[#2346ad]" />
        <Triangle dir="left" className="fill-[#78788a]" />
        <Triangle dir="right" className="fill-[#78788a]" />
      </div>
    </div>
    <div className="flex-1 border-2 border-t border-[#9c9baa] bg-white">
      <h2 className="pt-[7px] text-center text-[24px] leading-[28px]">Flight times to Tokyo</h2>
      <div className="flex items-start justify-between pr-2.5 pt-[13px]">
        <GanttChart />
        <div className="w-[221px] flex-shrink-0 border border-[#c6c6c6] pb-px">
          <h3 className="pt-1.5 text-center text-base font-bold leading-5">Departure</h3>
          <ul className="mt-1.5 px-[3px]">
            {legend.map(({ label, color }) => (
              <li key={label} className="flex h-[18px] items-center gap-[5px] font-bold">
                <span className="h-3.5 w-[18px] flex-shrink-0 border border-black/15" style={{ backgroundColor: color }} />
                <span className="whitespace-nowrap">{label}</span>
              </li>
            ))}
          </ul>
        </div>
      </div>
    </div>
  </section>
);

const StatusBar: React.FC = () => (
  <footer className="mx-[5px] mt-px flex h-7 items-center justify-end border-y border-[#b4b4be] bg-linear-to-b from-[#dadbe1] to-[#c9cad2] pr-5">
    <span className="mr-2 h-4 w-px bg-[#b0b0ba]" />
    <span>4000 data rows loaded</span>
    <span className="ml-2.5 flex">
      <Database />
    </span>
    <svg width="12" height="12" viewBox="0 0 12 12" className="-mr-5 ml-4 mt-2" stroke="#77778a">
      <path d="M1 11L11 1M5 11l6-6M9 11l2-2" />
    </svg>
  </footer>
);

const Callout: React.FC<{ place: string; children: string }> = ({ place, children }) => (
  <p className={`absolute whitespace-nowrap font-['Noto_Sans_CJK_SC',sans-serif] text-[27px] font-bold leading-8 text-white ${place}`}>
    {children}
  </p>
);

// Dark veil over the window, cut out around each explained region
const Spotlight: React.FC = () => (
  <div className="pointer-events-none absolute inset-0">
    <div className="h-full bg-black/65 [clip-path:polygon(evenodd,0_0,166px_0,166px_44px,0_44px,0_146px,1049px_146px,1049px_44px,241px_44px,241px_0,100%_0,100%_198px,calc(100%_-_17px)_198px,713px_198px,713px_167px,606px_167px,606px_198px,595px_198px,595px_839px,calc(100%_-_17px)_839px,calc(100%_-_17px)_198px,100%_198px,100%_848px,calc(100%_-_19px)_848px,calc(100%_-_185px)_848px,calc(100%_-_185px)_874px,calc(100%_-_19px)_874px,calc(100%_-_19px)_848px,100%_848px,100%_100%,0_100%,0_169px,351px_169px,351px_843px,589px_843px,589px_169px,0_169px)]" />
    <Callout place="left-[256px] top-[6px]">Menu</Callout>
    <Callout place="left-[202px] top-[248px]">Data area</Callout>
    <Callout place="left-[196px] top-[694px]">Pivot fields</Callout>
    <Callout place="left-[730px] top-[162px]">Plug-in window</Callout>
    <Callout place="bottom-[7px] right-[196px]">Status bar</Callout>
  </div>
);

const App: React.FC = () => (
  <div className="relative flex min-h-screen flex-col overflow-hidden bg-[#c9cad1] pb-[5px] font-['DejaVu_Sans_Condensed','DejaVu_Sans',sans-serif] text-[11px] text-[#1e1c38]">
    <header className="bg-linear-to-b from-[#dadbe0] to-[#c9cad1]">
      <TitleBar />
      <RibbonTabs />
    </header>
    <Ribbon />
    <main className="mx-[5px] flex flex-1 gap-1 bg-[#e3e5e9] pl-0.5 pr-0.5 pt-[5px]">
      <ModulesPanel />
      <div className="flex min-w-0 flex-1 flex-col">
        <div className="flex items-center pl-[3px] pr-2.5">
          <button className="-mb-px flex h-[23px] w-[107px] items-center justify-between border border-b-0 border-[#9c9baa] bg-[#ebecf0] px-[7px]">
            SampleProject
            <Close />
          </button>
          <span className="ml-auto">
            <Caret className="fill-[#2346ad]" />
          </span>
        </div>
        <div className="flex flex-1 border border-[#9c9baa] bg-[#e3e5e9] p-0.5">
          <ProjectPanel />
          <div className="w-1" />
          <DataPanel />
          <PluginWindow />
        </div>
      </div>
    </main>
    <StatusBar />
    <Spotlight />
  </div>
);

export default App;
